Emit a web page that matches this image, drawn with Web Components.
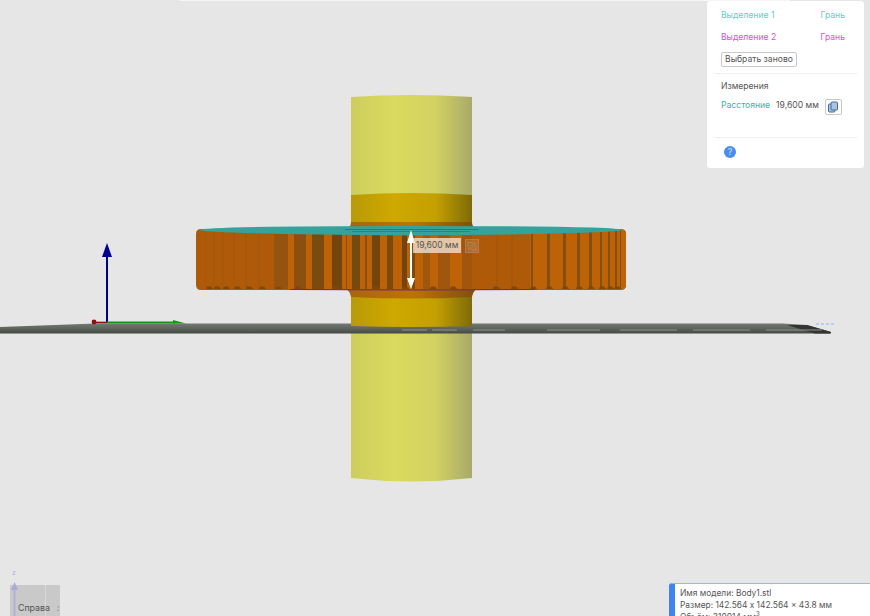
<!DOCTYPE html>
<html lang="ru">
<head>
<meta charset="utf-8">
<title>Измерения</title>
<style>
html,body{margin:0;height:100%;overflow:hidden;background:#e6e6e6}
</style>
</head>
<body>
<viewer-page>
    <measure-panel></measure-panel>
    <view-cube></view-cube>
    <model-info></model-info>
</viewer-page>

<script>
// x, width, colour of the lit and shaded tooth faces, read off left to right
const BANDS = [
    [198,1,'#a8580a'],[205,1,'#a8580a'],[213,2,'#a8580a'],[222,2,'#a8580a'],[233,2,'#a8580a'],[245,2,'#a8580a'],[258,2,'#a8580a'],
    [274,14,'#955310'],[288,6,'#bd6206'],[294,12,'#8b5010'],[306,6,'#bd6206'],[312,12,'#7a4a0f'],[324,8,'#bd6206'],
    [332,10,'#74440d'],[342,4,'#bd6206'],[346,1,'#8a5010'],[347,5,'#bd6206'],[352,8,'#744a10'],[360,5,'#bd6206'],
    [365,2,'#8a5010'],[367,5,'#bd6206'],[372,8,'#74440d'],[380,7,'#bd6206'],[387,6,'#7a4a0f'],[393,9,'#bd6206'],
    [402,5,'#74440d'],[407,5,'#bd6206'],[412,3,'#7a4a0f'],[415,8,'#bd6206'],[423,7,'#a0560c'],[430,8,'#bd6206'],
    [438,12,'#a0560c'],[450,12,'#bd6206'],[462,10,'#a0560c'],
    [496,2,'#a5570a'],[511,2,'#a5570a'],
    [530,96,'#bd6206'],
    [531,2,'#84500f'],[547,3,'#84500f'],[563,3,'#84500f'],[577,3,'#84500f'],[589,3,'#84500f'],[600,2,'#84500f'],[608,2,'#84500f'],[615,2,'#84500f'],[620,1,'#84500f']
];
// little dark trapezoids where a tooth meets the bottom edge
const NOTCHES = [206,214,223,234,246,259,275,295,313,333,353,373,402,430,450,493,511,530,546,562,576,588,599,607,614];

class ViewerPage extends HTMLElement {
    connectedCallback() {
        this.attachShadow({ mode: 'open' });
        const bands = BANDS.map(b => `<rect x="${b[0]}" y="230" width="${b[1]}" height="59" fill="${b[2]}"/>`).join('');
        const notches = NOTCHES.map(x => `<path d="M${x} 289L${x + 1} 286.5H${x + 5}L${x + 7} 289Z" fill="#7f4808"/>`).join('');
        this.shadowRoot.innerHTML = `
            <style>
                :host{display:block;position:relative;width:870px;height:616px;overflow:hidden;background:#e6e6e6}
                svg.scene{position:absolute;left:0;top:0}
                .strip{position:absolute;left:180px;top:0;width:610px;height:1px;background:#f6f6f6}
                .label{position:absolute;left:413px;top:238px;width:48px;height:15px;text-align:center;background:rgba(242,228,210,.78);color:#555;font:8.6px/15px Inter,sans-serif;white-space:nowrap}
                .edit{position:absolute;left:465px;top:239px;width:14px;height:14px;background:rgba(205,140,75,.35);border:1px solid rgba(170,140,110,.6);box-sizing:border-box}
                .edit svg{display:block;margin:1px}
            </style>
            <div class="strip"></div>
            <svg class="scene" width="870" height="616" viewBox="0 0 870 616">
                <defs>
                    <linearGradient id="yellow"><stop offset="0" stop-color="#cdcd5e"/><stop offset=".35" stop-color="#dada5e"/><stop offset=".7" stop-color="#d2d262"/><stop offset="1" stop-color="#a9a96a"/></linearGradient>
                    <linearGradient id="gold"><stop offset="0" stop-color="#b89a08"/><stop offset=".35" stop-color="#cfa800"/><stop offset=".7" stop-color="#c4a000"/><stop offset="1" stop-color="#7f6a08"/></linearGradient>
                    <linearGradient id="collar"><stop offset="0" stop-color="#a8640a"/><stop offset=".5" stop-color="#bd7406"/><stop offset="1" stop-color="#7e4f08"/></linearGradient>
                    <linearGradient id="plate" x1="0" y1="0" x2="0" y2="1"><stop offset="0" stop-color="#747973"/><stop offset=".55" stop-color="#5c615b"/><stop offset="1" stop-color="#454945"/></linearGradient>
                </defs>

                <!-- shaft -->
                <path d="M351 97Q411 93 472 97V478Q411 485 351 478Z" fill="url(#yellow)"/>
                <path d="M351 195Q411 191 472 195V224H351Z" fill="url(#gold)"/>
                <path d="M351 295H472V326Q411 328 351 326Z" fill="url(#gold)"/>
                <path d="M348 228Q351 226 351 222H472Q472 226 475 228V234H348Z" fill="url(#collar)"/>
                <path d="M345 288Q350 291 351 297Q411 300 472 297Q473 291 478 288Z" fill="url(#collar)"/>

                <!-- gear -->
                <clipPath id="gearClip"><path d="M201 229H621Q626 229 626 234V285Q626 290 621 290H201Q196 290 196 285V234Q196 229 201 229Z"/></clipPath>
                <g clip-path="url(#gearClip)">
                    <rect x="196" y="229" width="430" height="61" fill="#af5a08"/>
                    ${bands}
                    ${notches}
                </g>
                <path d="M290 289.5Q411 290.5 535 289.5" fill="none" stroke="#6f2a6a" stroke-width="1"/>
                <path d="M199 230Q204 226 411 226Q618 226 623 230Q611 234 411 235.5Q211 234 199 230Z" fill="#35a39b"/>
                <path d="M345 229.5H478" stroke="#8a5c18" stroke-width="1"/>
                <path d="M352 231.5H470" stroke="#2f7c70" stroke-width=".8"/>

                <!-- plate, passes in front of the shaft -->
                <path d="M0 327L95 323.5H783L807 325L831 332V333.5H0Z" fill="url(#plate)"/>
                <path d="M351 323H472V326Q411 328 351 326Z" fill="url(#gold)"/>
                <path d="M787 325L807 325L831 332L830 333.5H815Z" fill="#333533"/>
                <path d="M402 330H427M432 330H457M473 330H505M547 330H600M620 330H677M693 330H750M766 330H822" stroke="#8e938e" stroke-width="1"/>
                <path d="M816 324H834" stroke="#8cb8f5" stroke-width="1" stroke-dasharray="3 2"/>

                <!-- axes -->
                <path d="M107 323V253" stroke="#00008e" stroke-width="2"/>
                <path d="M107 243L102 257H112Z" fill="#00008e"/>
                <path d="M95 322.5H107" stroke="#8a1010" stroke-width="1.6"/>
                <circle cx="94" cy="322" r="2.4" fill="#8a1010"/>
                <path d="M107 322.5H175" stroke="#0e9a12" stroke-width="1.8"/>
                <path d="M173 320L186 323.5H173Z" fill="#0e9a12"/>

                <!-- distance arrow -->
                <path d="M411 240V280" stroke="#fff" stroke-width="2"/>
                <path d="M411 230L407 243H415ZM411 289L407 278H415Z" fill="#fff"/>
            </svg>
            <div class="label">19,600 мм</div>
            <div class="edit"><svg width="10" height="10" viewBox="0 0 10 10"><path d="M1.5 8.5L2 6.5L7 1.5L8.5 3L3.5 8ZM1 1.5H5M1 1.5V6M9 5V9H4" fill="none" stroke="#a58a70" stroke-width=".9"/></svg></div>
            <slot></slot>
        `;
    }
}

class MeasurePanel extends HTMLElement {
    connectedCallback() {
        this.attachShadow({ mode: 'open' });
        this.shadowRoot.innerHTML = `
            <style>
                :host{display:block;position:absolute;left:707px;top:1px;width:157px;height:167px;box-sizing:border-box;padding:3px 7px 0;background:#fff;border-radius:3px;font:8.6px/14px Inter,sans-serif;color:#555}
                .row{display:flex;justify-content:space-between;padding:0 12px 0 7px;height:22px;align-items:center}
                .cyan{color:#5fcfc8}
                .pink{color:#cf55cf}
                button{display:block;margin:4px 0 0 7px;height:15px;padding:0;width:76px;box-sizing:border-box;border:1px solid #c8c8c8;border-radius:2px;background:#fff;color:#555;font:inherit;line-height:13px;white-space:nowrap}
                hr{margin:6px 0 0;border:0;border-top:1px solid #eee}
                h4{margin:5px 0 0 7px;font:inherit;line-height:14px;color:#555}
                .dist{display:flex;align-items:center;margin:3px 0 0 7px;height:18px}
                .dist b{font-weight:400;color:#3fb0a2;margin-right:6px}
                .dist span{margin-right:6px}
                .copy{width:17px;height:16px;box-sizing:border-box;border:1px solid #c8c8c8;border-radius:2px;display:flex;align-items:center;justify-content:center;margin-top:3px}
                .foot{margin-top:23px}
                .help{display:block;width:12px;height:12px;margin:8px 0 0 10px;border-radius:50%;background:#4a8cf0;color:#cfe0fb;font:400 9px/12px Inter,sans-serif;text-align:center}
            </style>
            <div class="row cyan"><span>Выделение 1</span><span>Грань</span></div>
            <div class="row pink"><span>Выделение 2</span><span>Грань</span></div>
            <button>Выбрать заново</button>
            <hr>
            <h4>Измерения</h4>
            <div class="dist"><b>Расстояние</b><span>19,600 мм</span>
                <div class="copy"><svg width="12" height="12" viewBox="0 0 12 12"><rect x="1.5" y="3" width="6.5" height="8" rx="1" fill="#a9c3e6" stroke="#4a6a92"/><rect x="4" y="1" width="6.5" height="8" rx="1" fill="#a9c3e6" stroke="#4a6a92"/></svg></div>
            </div>
            <hr class="foot">
            <span class="help">?</span>
        `;
    }
}

class ViewCube extends HTMLElement {
    connectedCallback() {
        this.attachShadow({ mode: 'open' });
        this.shadowRoot.innerHTML = `
            <style>
                :host{display:block;position:absolute;left:0;top:568px;width:62px;height:48px;font:8.8px/14px Inter,sans-serif;color:#555}
                .z{position:absolute;left:12px;top:1px;font-size:7px;line-height:8px;color:#b5b5d5}
                .face{position:absolute;left:10px;top:17px;width:50px;height:31px;background:#c9c9c9}
                .line{position:absolute;left:45px;top:17px;width:1px;height:31px;background:#d8d8d8}
                .txt{position:absolute;left:18px;top:33px;white-space:nowrap}
                .more{position:absolute;left:57px;top:33px;color:#888}
                svg{position:absolute;left:10px;top:14px}
            </style>
            <div class="face"></div><div class="line"></div>
            <span class="z">z</span>
            <svg width="10" height="34" viewBox="0 0 10 34"><path d="M4.5 0L1 8H8Z" fill="#aaaad8"/><path d="M4.5 8V34" stroke="#b0b0d8" stroke-width="2"/></svg>
            <span class="txt">Справа</span>
            <span class="more">:</span>
        `;
    }
}

class ModelInfo extends HTMLElement {
    connectedCallback() {
        this.attachShadow({ mode: 'open' });
        this.shadowRoot.innerHTML = `
            <style>
                :host{display:block;position:absolute;left:669px;top:583px;width:201px;height:33px;overflow:hidden;box-sizing:border-box;padding:3px 0 0 5px;background:#fff;border-left:6px solid #3f84f0;border-top:1px solid #8fb8f5;border-radius:3px 0 0 0;font:8.4px/12px Inter,sans-serif;color:#555;white-space:nowrap}
                sup{font-size:6px;line-height:0}
            </style>
            <div>Имя модели: Body1.stl</div>
            <div>Размер: 142.564 x 142.564 x 43.8 мм</div>
            <div>Объём: 310014 мм<sup>3</sup></div>
        `;
    }
}

customElements.define('viewer-page', ViewerPage);
customElements.define('measure-panel', MeasurePanel);
customElements.define('view-cube', ViewCube);
customElements.define('model-info', ModelInfo);
</script>
</body>
</html>
